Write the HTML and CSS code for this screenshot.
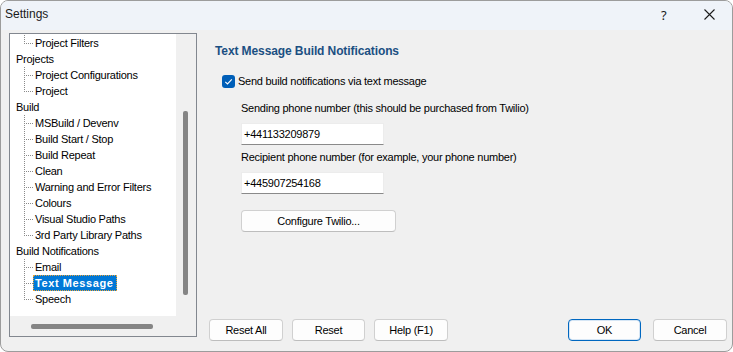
FILE: index.html
```html
<!DOCTYPE html>
<html>
<head>
<meta charset="utf-8">
<title>Settings</title>
<link rel="stylesheet" href="styles.css">
</head>
<body>
<div class="window">
  <div class="titlebar">
    <span class="title">Settings</span>
    <span class="help">?</span>
    <span class="close"><svg width="11" height="11" viewBox="0 0 11 11"><path d="M0.5 0.5 L10.5 10.5 M10.5 0.5 L0.5 10.5" stroke="#1b1b1b" stroke-width="1.1" fill="none"/></svg></span>
  </div>
  <div class="main">
    <div class="left">
      <div class="treebox">
        <div class="tree">
          <div class="row child last"><span class="conn"></span><span class="lbl">Project Filters</span></div>
          <div class="row root"><span class="lbl">Projects</span></div>
          <div class="row child"><span class="conn"></span><span class="lbl">Project Configurations</span></div>
          <div class="row child last"><span class="conn"></span><span class="lbl">Project</span></div>
          <div class="row root"><span class="lbl">Build</span></div>
          <div class="row child"><span class="conn"></span><span class="lbl">MSBuild / Devenv</span></div>
          <div class="row child"><span class="conn"></span><span class="lbl">Build Start / Stop</span></div>
          <div class="row child"><span class="conn"></span><span class="lbl">Build Repeat</span></div>
          <div class="row child"><span class="conn"></span><span class="lbl">Clean</span></div>
          <div class="row child"><span class="conn"></span><span class="lbl">Warning and Error Filters</span></div>
          <div class="row child"><span class="conn"></span><span class="lbl">Colours</span></div>
          <div class="row child"><span class="conn"></span><span class="lbl">Visual Studio Paths</span></div>
          <div class="row child last"><span class="conn"></span><span class="lbl">3rd Party Library Paths</span></div>
          <div class="row root"><span class="lbl">Build Notifications</span></div>
          <div class="row child"><span class="conn"></span><span class="lbl">Email</span></div>
          <div class="row child"><span class="conn"></span><span class="lbl selected">Text Message</span></div>
          <div class="row child last"><span class="conn"></span><span class="lbl">Speech</span></div>
        </div>
        <div class="vscroll"><div class="vthumb"></div></div>
        <div class="hscroll"><div class="hthumb"></div></div>
        <div class="corner"></div>
      </div>
    </div>
    <div class="right">
      <div class="content">
        <div class="heading">Text Message Build Notifications</div>
        <label class="check">
          <span class="box"><svg width="13" height="13" viewBox="0 0 13 13"><path d="M3.3 6.8 L5.5 9 L9.8 4.4" stroke="#fff" stroke-width="1.1" fill="none"/></svg></span>
          <span class="checktext">Send build notifications via text message</span>
        </label>
        <div class="field">
          <div class="flabel">Sending phone number (this should be purchased from Twilio)</div>
          <div class="textbox">+441133209879</div>
          <div class="flabel second">Recipient phone number (for example, your phone number)</div>
          <div class="textbox">+445907254168</div>
          <div class="btn configure">Configure Twilio...</div>
        </div>
      </div>
      <div class="buttons">
        <div class="btn wide">Reset All</div>
        <div class="btn">Reset</div>
        <div class="btn wide">Help (F1)</div>
        <div class="spacer"></div>
        <div class="btn ok">OK</div>
        <div class="btn wide cancel">Cancel</div>
      </div>
    </div>
  </div>
</div>
</body>
</html>
```
FILE: styles.css
```css
html, body {
  margin: 0;
  padding: 0;
  background: #ffffff;
}
body {
  font-family: "Liberation Sans", Arial, sans-serif;
  font-size: 11px;
  letter-spacing: -0.25px;
  color: #000;
}
.window {
  width: 731px;
  height: 350px;
  border: 1px solid #9c9c9c;
  border-radius: 8px;
  background: #f0f0f0;
  display: flex;
  flex-direction: column;
  overflow: hidden;
}
.titlebar {
  height: 29px;
  background: #eff3f9;
  display: flex;
  align-items: center;
  flex: none;
}
.title {
  font-size: 12px;
  letter-spacing: 0;
  margin-left: 4px;
  color: #1a1a1a;
  flex: 1;
  position: relative;
  top: -2px;
}
.help {
  font-family: "Noto Sans", sans-serif;
  font-size: 13px;
  color: #1a1a1a;
  width: 10px;
  margin-right: 33px;
  position: relative;
  top: -1px;
}
.close {
  display: flex;
  width: 11px;
  height: 11px;
  margin-right: 17px;
  position: relative;
  top: -1px;
}
.main {
  flex: 1;
  display: flex;
  min-height: 0;
}
.left {
  padding: 3px 0 0 8px;
  flex: none;
}
.treebox {
  width: 186px;
  height: 302px;
  border: 1px solid #82878f;
  display: grid;
  grid-template-columns: 166px 20px;
  grid-template-rows: 282px 20px;
  background: #f0f0f0;
}
.tree {
  background: #fff;
  padding-top: 1px;
  overflow: hidden;
}
.row {
  height: 16px;
  display: flex;
  align-items: stretch;
  white-space: nowrap;
}
.row .lbl {
  line-height: 16px;
  padding: 0 2px;
}
.row.root {
  padding-left: 4px;
}
.row.child {
  padding-left: 14px;
}
.conn {
  width: 9px;
  flex: none;
  background-image:
    repeating-linear-gradient(to bottom, #8a8a8a 0 1px, transparent 1px 2px),
    repeating-linear-gradient(to right, #8a8a8a 0 1px, transparent 1px 2px);
  background-size: 1px 100%, 9px 1px;
  background-position: 0 0, 0 8px;
  background-repeat: no-repeat;
}
.row.last .conn {
  background-size: 1px 9px, 9px 1px;
}
.lbl.selected {
  background: #0078d7;
  color: #fff;
  font-weight: bold;
  letter-spacing: 0.6px;
  padding: 0 3px 0 2px;
  outline: 1px dotted #e8a33a;
  outline-offset: -1px;
}
.vthumb {
  margin: 77px 0 0 7px;
  width: 5px;
  height: 184px;
  background: #858585;
  border-radius: 2px;
}
.hthumb {
  margin: 8px 0 0 21px;
  width: 122px;
  height: 5px;
  background: #858585;
  border-radius: 2px;
}
.hscroll {
  grid-column: 1;
}
.right {
  flex: 1;
  display: flex;
  flex-direction: column;
  padding: 13px 5px 10px 12px;
}
.content {
  flex: 1;
}
.heading {
  font-weight: bold;
  font-size: 12px;
  letter-spacing: -0.1px;
  color: #1b4f82;
  line-height: 16px;
  margin-left: 6px;
}
.check {
  display: flex;
  align-items: center;
  margin: 15px 0 0 13px;
  height: 14px;
}
.box {
  width: 13px;
  height: 13px;
  border-radius: 3px;
  background: #005fb8;
  display: flex;
}
.checktext {
  margin-left: 3px;
  line-height: 14px;
}
.field {
  margin-left: 32px;
  padding-top: 13px;
}
.flabel {
  line-height: 14px;
}
.flabel.second {
  margin-top: 5px;
}
.textbox {
  margin-top: 8px;
  background: #fff;
  border: 1px solid #ececec;
  border-bottom: 1px solid #8a8a8a;
  line-height: 20px;
  padding-left: 2px;
  box-sizing: border-box;
  width: 143px;
  height: 22px;
}
.btn {
  height: 22px;
  box-sizing: border-box;
  border: 1px solid #d0d0d0;
  border-bottom-color: #bdbdbd;
  border-radius: 4px;
  background: #fdfdfd;
  display: flex;
  align-items: center;
  justify-content: center;
  width: 73px;
  flex: none;
}
.btn.wide {
  width: 74px;
}
.btn.configure {
  width: 155px;
  margin-top: 16px;
}
.buttons {
  display: flex;
  gap: 9px;
}
.spacer {
  flex: 1;
}
.btn.ok {
  border: 1px solid #0067c0;
  box-shadow: inset 0 0 0 1px #d6e6f5;
  margin-right: 3px;
}
```
